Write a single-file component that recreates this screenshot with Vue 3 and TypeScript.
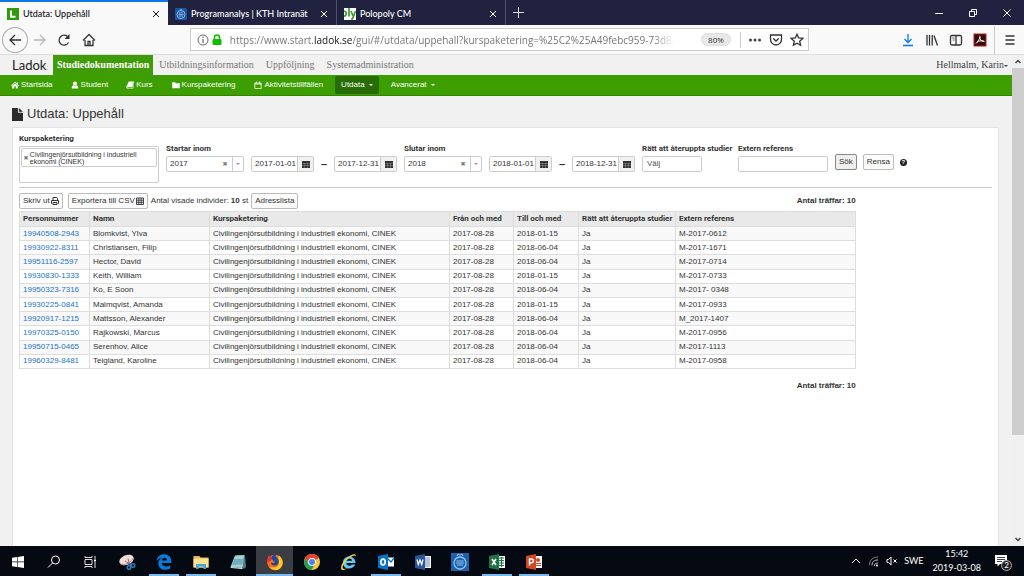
<script setup lang="ts">
import { ref } from 'vue'

interface Row {
  pnr: string
  name: string
  to: string
  reference: string
}

const course = 'Civilingenjörsutbildning i industriell ekonomi, CINEK'
const rows: Row[] = [
  { pnr: '19940508-2943', name: 'Blomkvist, Ylva', to: '2018-01-15', reference: 'M-2017-0612' },
  { pnr: '19930922-8311', name: 'Christiansen, Filip', to: '2018-06-04', reference: 'M-2017-1671' },
  { pnr: '19951116-2597', name: 'Hector, David', to: '2018-06-04', reference: 'M-2017-0714' },
  { pnr: '19930830-1333', name: 'Keith, William', to: '2018-01-15', reference: 'M-2017-0733' },
  { pnr: '19950323-7316', name: 'Ko, E Soon', to: '2018-06-04', reference: 'M-2017- 0348' },
  { pnr: '19930225-0841', name: 'Malmqvist, Amanda', to: '2018-01-15', reference: 'M-2017-0933' },
  { pnr: '19920917-1215', name: 'Mattsson, Alexander', to: '2018-06-04', reference: 'M_2017-1407' },
  { pnr: '19970325-0150', name: 'Rajkowski, Marcus', to: '2018-06-04', reference: 'M-2017-0956' },
  { pnr: '19950715-0465', name: 'Serenhov, Alice', to: '2018-06-04', reference: 'M-2017-1113' },
  { pnr: '19960329-8481', name: 'Teigland, Karoline', to: '2018-06-04', reference: 'M-2017-0958' },
]
const columns = ['Personnummer', 'Namn', 'Kurspaketering', 'Från och med', 'Till och med', 'Rätt att återuppta studier', 'Extern referens']

const periods = ref([
  { id: 'start', label: 'Startar inom', year: '2017', from: '2017-01-01', to: '2017-12-31' },
  { id: 'end', label: 'Slutar inom', year: '2018', from: '2018-01-01', to: '2018-12-31' },
])
const resume = ref('')
const external = ref('')
</script>

<template>
  <div class="screen">
    <header class="tabs">
      <div class="tab active">
        <svg class="fav" viewBox="0 0 12 12"><rect width="12" height="12" fill="#2f9a0c" /><path d="M4 2.5v6.3h4.5" fill="none" stroke="#fff" stroke-width="2" /></svg>
        <span class="tab-title">Utdata: Uppehåll</span>
        <button class="close" aria-label="Stäng flik"><svg viewBox="0 0 8 8"><path d="M1 1l6 6M7 1L1 7" /></svg></button>
      </div>
      <div class="tab">
        <svg class="fav" viewBox="0 0 12 12"><rect width="12" height="12" rx="1" fill="#1b56a5" /><circle cx="6" cy="6.5" r="4" fill="none" stroke="#8db9ea" /><path d="M4 5h4M3.5 6.5h5M4 8h4M5 2l1-1 1 1" stroke="#8db9ea" fill="none" stroke-width=".8" /></svg>
        <span class="tab-title">Programanalys | KTH Intranät</span>
        <button class="close" aria-label="Stäng flik"><svg viewBox="0 0 8 8"><path d="M1 1l6 6M7 1L1 7" /></svg></button>
      </div>
      <div class="tab">
        <svg class="fav" viewBox="0 0 12 12"><rect width="12" height="12" fill="#fff" /><path d="M0 3.500c3-1 3 5 0 4.500M5 0v8.500M7 3l2 5M11.500 3L8.500 11H7" fill="none" stroke="#3a9b35" stroke-width="1.700" /></svg>
        <span class="tab-title">Polopoly CM</span>
        <button class="close" aria-label="Stäng flik"><svg viewBox="0 0 8 8"><path d="M1 1l6 6M7 1L1 7" /></svg></button>
      </div>
      <button class="new-tab" aria-label="Ny flik"><svg viewBox="0 0 11 11"><path d="M5.500 0v11M0 5.500h11" /></svg></button>
      <div class="window-buttons">
        <button aria-label="Minimera"><svg viewBox="0 0 10 10"><path d="M1 5.500h8" /></svg></button>
        <button aria-label="Återställ"><svg viewBox="0 0 10 10"><path d="M1.500 3.500h5v5h-5zM3.500 3.500v-2h5v5h-2" /></svg></button>
        <button aria-label="Stäng"><svg viewBox="0 0 10 10"><path d="M1.500 1.500l7 7M8.500 1.500l-7 7" /></svg></button>
      </div>
    </header>

    <div class="toolbar">
      <button class="back" aria-label="Bakåt"><svg viewBox="0 0 14 14"><path d="M13 7H2M7 2L2 7l5 5" /></svg></button>
      <button class="tool faded" aria-label="Framåt"><svg viewBox="0 0 14 14"><path d="M1 7h11M7 2l5 5-5 5" /></svg></button>
      <button class="tool" aria-label="Ladda om"><svg viewBox="0 0 14 14"><path d="M11.500 9.500A5 5 0 1 1 11 4" /><path d="M12.500 1v5h-5z" fill="#333" stroke="none" /></svg></button>
      <button class="tool" aria-label="Hem"><svg viewBox="0 0 14 14"><path d="M1 7.500L7 1.500l6 6M3 7v5.500h8V7M6 12V8.500h2V12" /></svg></button>
      <div class="address">
        <svg class="info" viewBox="0 0 12 12"><circle cx="6" cy="6" r="5" fill="none" stroke="#666" /><path d="M6 5v4M6 2.800v1.200" stroke="#666" stroke-width="1.200" /></svg>
        <svg class="lock" viewBox="0 0 10 12"><path d="M2.500 5V3.500a2.500 2.500 0 0 1 5 0V5" fill="none" stroke="#12bc00" stroke-width="1.600" /><rect x=".5" y="5" width="9" height="6" rx="1" fill="#12bc00" /></svg>
        <div class="url">https://www.start.<b>ladok.se</b>/gui/#/utdata/uppehall?kurspaketering=%25C2%25A49febc959-73d8-</div>
        <button class="zoom">80%</button>
        <i class="rule"></i>
        <button class="tool" aria-label="Sidåtgärder"><svg viewBox="0 0 14 14"><g fill="#444" stroke="none"><circle cx="2.500" cy="7" r="1.500" /><circle cx="7" cy="7" r="1.500" /><circle cx="11.500" cy="7" r="1.500" /></g></svg></button>
        <button class="tool" aria-label="Pocket"><svg viewBox="0 0 14 14"><path d="M1.500 2h11v4.500a5.500 5.500 0 0 1-11 0zM4.300 5.500L7 8l2.700-2.500" /></svg></button>
        <button class="tool" aria-label="Bokmärk"><svg viewBox="0 0 14 14"><path d="M7 1.200l1.700 3.800 4.100.4-3.100 2.800.9 4.100L7 10.200l-3.600 2.100.9-4.100L1.200 5.400l4.100-.4z" /></svg></button>
      </div>
      <div class="extras">
        <button class="tool blue" aria-label="Hämtningar"><svg viewBox="0 0 14 14"><path d="M7 1v8.500M3.500 6L7 9.500 10.500 6M2 12.500h10" /></svg></button>
        <button class="tool" aria-label="Bibliotek"><svg viewBox="0 0 14 14"><path d="M2 2v10.500M4.500 2v10.500M7.200 2v10.500M9 2.500l3.500 10" /></svg></button>
        <button class="tool" aria-label="Sidofält"><svg viewBox="0 0 14 14"><rect x="1.500" y="2.500" width="11" height="9.500" rx="1.500" /><path d="M7 2.500V12" /><path d="M3.200 5h2.300M3.700 7h1.800" stroke-width=".8" /></svg></button>
        <button class="tool" aria-label="PDF"><svg viewBox="0 0 14 14"><rect x="1" y="1" width="12" height="12" fill="#35080a" stroke="#b8241f" stroke-width="1" /><path d="M6.500 3c1.500 0 .5 3-3.500 7.500M6.500 4c.5 3 2 4.500 5 4.500M4 9c2-1 4-1.500 6.500-1.200" stroke="#fff" stroke-width="1" /></svg></button>
        <i class="rule tall"></i>
        <button class="tool" aria-label="Meny"><svg viewBox="0 0 14 14"><path d="M2.500 3h9M2.500 7h9M2.500 11h9" /></svg></button>
      </div>
    </div>

    <div class="viewport">
      <div class="page">
        <nav class="areas">
          <a class="logo" href="#">Ladok<span>:</span></a>
          <a class="area current" href="#">Studiedokumentation</a>
          <a class="area" href="#">Utbildningsinformation</a>
          <a class="area" href="#">Uppföljning</a>
          <a class="area" href="#">Systemadministration</a>
          <a class="user" href="#">Hellmalm, Karin<i class="caret"></i></a>
        </nav>
        <nav class="menu">
          <a href="#"><svg viewBox="0 0 10 10"><path d="M5 1L0 5.500l.6.600L5 2.300l4.400 3.800.6-.600L8.500 4V1.500H7.300V3zM1.500 6L5 3l3.500 3v3.500H6V7H4v2.500H1.500z" /></svg>Startsida</a>
          <a href="#"><svg viewBox="0 0 10 10"><circle cx="5" cy="3" r="2.500" /><path d="M1 9.500C.5 6 2.500 5 3.300 5.200c1 .8 2.400.8 3.400 0C7.500 5 9.500 6 9 9.500z" /></svg>Student</a>
          <a href="#"><svg viewBox="0 0 10 10"><path d="M3.500.5H10L8 7.500H2c-.7.200-.5 1 0 1h6.500L10 3l.3.500L9 9.500H1.500C.3 9.500 0 8.500.5 7z" /></svg>Kurs</a>
          <a href="#"><svg viewBox="0 0 10 10"><path d="M.3 1.500h3.500l1 1.200h4.900v6.300H.3z" /></svg>Kurspaketering</a>
          <a href="#"><svg viewBox="0 0 10 10"><path d="M1 2.500h8v7H1zM1 3.800h8M3 .5v2.500M7 .5v2.500" fill="none" stroke="#fff" /></svg>Aktivitetstillfällen</a>
          <a class="open" href="#">Utdata<i class="caret"></i></a>
          <a href="#">Avancerat<i class="caret"></i></a>
        </nav>

        <h1><svg viewBox="0 0 12 14"><path d="M0 0h6.500v5H12v9H0zM7.500 0L12 4H7.500z" fill="#2b2b2b" /></svg>Utdata: Uppehåll</h1>

        <main class="panel">
          <form class="filters" @submit.prevent>
            <div class="field package">
              <label for="package">Kurspaketering</label>
              <div class="tagbox">
                <div class="tag"><button type="button" aria-label="Ta bort">✖</button><span>Civilingenjörsutbildning i industriell ekonomi (CINEK)</span></div>
                <input id="package" type="text">
              </div>
            </div>
            <template v-for="p in periods" :key="p.id">
              <div class="field">
                <label :for="p.id">{{ p.label }}</label>
                <div class="combo">
                  <select :id="p.id" v-model="p.year"><option>2017</option><option>2018</option></select>
                  <button type="button" class="clear" aria-label="Rensa år">✖</button>
                  <span class="drop"><i class="caret"></i></span>
                </div>
              </div>
              <div class="range">
                <div class="date"><input v-model="p.from" type="text" aria-label="Från datum"><button type="button" aria-label="Välj datum"><svg viewBox="0 0 8 8"><path d="M0 1h8v7H0z" fill="#333" /><path d="M0 3.500h8M0 5.500h8M2.500 3v5M5.500 3v5" stroke="#aaa" stroke-width=".4" /></svg></button></div>
                <b class="dash">–</b>
                <div class="date"><input v-model="p.to" type="text" aria-label="Till datum"><button type="button" aria-label="Välj datum"><svg viewBox="0 0 8 8"><path d="M0 1h8v7H0z" fill="#333" /><path d="M0 3.500h8M0 5.500h8M2.500 3v5M5.500 3v5" stroke="#aaa" stroke-width=".4" /></svg></button></div>
              </div>
            </template>
            <div class="field resume">
              <label for="resume">Rätt att återuppta studier</label>
              <select id="resume" v-model="resume"><option value="">Välj</option><option>Ja</option><option>Nej</option></select>
            </div>
            <div class="field external">
              <label for="external">Extern referens</label>
              <input id="external" v-model="external" type="text">
            </div>
            <div class="actions">
              <button class="btn focus">Sök</button>
              <button class="btn" type="reset">Rensa</button>
              <button class="help" type="button" aria-label="Hjälp">?</button>
            </div>
          </form>

          <section class="results">
            <div class="resultbar">
              <button class="btn">Skriv ut <svg viewBox="0 0 8 8"><path d="M2 3V.500h3.500L6.500 1.500V3M1 6.500H.5v-3h7v3H7M2 5.500h4v2H2z" fill="none" stroke="#333" /></svg></button>
              <button class="btn">Exportera till CSV <svg viewBox="0 0 8 8"><path d="M.5 1h7v6.500h-7zM.5 3.200h7M.5 5.300h7M2.800 1v6.500M5.200 1v6.500" fill="none" stroke="#333" stroke-width=".9" /></svg></button>
              <span>Antal visade individer: <strong>10</strong> st</span>
              <button class="btn">Adresslista</button>
              <strong class="hits">Antal träffar: 10</strong>
            </div>
            <table>
              <colgroup><col class="c1"><col class="c2"><col class="c3"><col class="c4"><col class="c5"><col class="c6"><col></colgroup>
              <thead><tr><th v-for="c in columns" :key="c" scope="col">{{ c }}</th></tr></thead>
              <tbody>
                <tr v-for="r in rows" :key="r.pnr">
                  <td><a href="#">{{ r.pnr }}</a></td>
                  <td>{{ r.name }}</td>
                  <td>{{ course }}</td>
                  <td>2017-08-28</td>
                  <td>{{ r.to }}</td>
                  <td>Ja</td>
                  <td>{{ r.reference }}</td>
                </tr>
              </tbody>
            </table>
            <strong class="hits bottom">Antal träffar: 10</strong>
          </section>
        </main>
      </div>
      <div class="scrollbar">
        <svg viewBox="0 0 12 12"><path d="M3.500 7.500L6 5l2.500 2.500" /></svg>
        <div class="track"><div class="thumb"></div></div>
        <svg viewBox="0 0 12 12"><path d="M3.500 4.500L6 7l2.500-2.500" /></svg>
      </div>
    </div>

    <footer class="taskbar">
      <button class="app sys" aria-label="Start"><svg viewBox="0 0 18 18"><path d="M3 4.700l5-.7v4.600H3zM8.600 3.900L15 3v5.600H8.600zM3 9.300h5v4.600l-5-.7zM8.600 9.300H15V15l-6.400-.9z" fill="#fff" /></svg></button>
      <button class="app sys" aria-label="Sök"><svg viewBox="0 0 18 18"><circle cx="10.500" cy="7" r="4" fill="none" stroke="#fff" /><path d="M7.500 10L3 14.500" stroke="#fff" /></svg></button>
      <button class="app sys" aria-label="Aktivitetsvy"><svg viewBox="0 0 18 18"><path d="M4 6.500h7v5H4zM4 3v1.500h7V3M4 15v-1.500h7V15M14 3v3M14 9v6" fill="none" stroke="#ddd" /><path d="M13 6.500h2v2h-2z" fill="#fff" /></svg></button>
      <button class="app" aria-label="Skärmklippverktyget"><svg viewBox="0 0 18 18"><ellipse cx="8.500" cy="7" rx="7.500" ry="4.800" fill="#eadedb" transform="rotate(-22 8.500 7)" /><path d="M2 10.500c4 2.500 10 0 13-5" fill="none" stroke="#b78e8b" /><path d="M10 5.500l1.500 6M7 8l5 3" stroke="#b43a3a" stroke-width=".8" /><g fill="none" stroke="#287fc4" stroke-width="1.400"><circle cx="11" cy="14.500" r="1.800" /><circle cx="15" cy="12.500" r="1.800" /><path d="M12 10l1 3" /></g></svg></button>
      <button class="app running" aria-label="Edge"><svg viewBox="0 0 18 18"><path d="M1.500 8C2 3.500 5.500 1 9.500 1.200c5 .2 7.300 4 7 8.800H6.700c.3 3.600 5.300 4.300 8.600 2.200v3.300c-5 2.700-12 1.200-12-5 0-2.800 1.600-4.500 3.700-5.500C4.500 5 2.800 6 1.500 8zm5.300-.5H12c0-3.700-4.700-3.500-5.200 0z" fill="#0a7bd8" /></svg></button>
      <button class="app running" aria-label="Utforskaren"><svg viewBox="0 0 18 18"><path d="M1.500 3h6l1 1.500h8v10h-15z" fill="#e7b84b" /><path d="M1.500 5.500h15v9h-15z" fill="#fde294" /><path d="M4 16v-5h10v5h-2.500v-2.500h-5V16z" fill="#41a5dc" /></svg></button>
      <button class="app" aria-label="Anteckningar"><svg viewBox="0 0 18 18"><path d="M6 3l10-1 1 12-2 2z" fill="#527b83" /><path d="M6 2.500l9-.5-1.500 13L1.500 14z" fill="#a2d1d8" /><path d="M5 6l9 0-.5 5.500L3 12z" fill="#6fb0bd" /><path d="M1.500 14l12 1v1L2 15z" fill="#edf5f6" /></svg></button>
      <button class="app running focused" aria-label="Firefox"><svg viewBox="0 0 18 18"><circle cx="9" cy="9.500" r="7.800" fill="#ff6b13" /><path d="M13 2.500c5 4 5 12-1 14.200-4 1-7-.7-8.500-3 4 2 9 .5 9.500-3.700.2-3-1.500-5 0-7.500z" fill="#ffc928" /><path d="M1.500 9C.8 5.500 2 3.500 3.500 2c.2 1.500 1.300 2 3 2l-2 4z" fill="#e4342b" /><path d="M5.500 6.500C5 3 8 1 10.500 1.700c-1.500 1-1 2 .5 3 2.500 2 2.500 7-1.500 7.800-3.500.7-4.700-1.500-4.700-3 1.700 1 3 .3 4.700-.8-1.700-.2-2.500-.7-2.500-1.700z" fill="#164ba5" /></svg></button>
      <button class="app" aria-label="Chrome"><svg viewBox="0 0 18 18"><circle cx="9" cy="9" r="8" fill="#f9c934" /><path d="M9 9L2.100 5A8 8 0 0 1 15.900 5z" fill="#e14436" /><path d="M2.100 5A8 8 0 0 0 8.500 17L12 11 5.500 10.500z" fill="#249b56" /><path d="M2.100 5A8 8 0 0 1 15.900 5H9l-3.500 5z" fill="#e14436" /><circle cx="9" cy="9" r="3.900" fill="#fff" /><circle cx="9" cy="9" r="3" fill="#4684ef" /></svg></button>
      <button class="app" aria-label="Internet Explorer"><svg viewBox="0 0 18 18"><path d="M15.500 10H6.300c.3 3.200 4.200 3.500 5.500 1.400h3.500C13 17 3 17.300 3 9.500 3 1.500 15.500 1 15.500 10zM6.300 7.800H12c-.3-2.800-5.200-3-5.700 0z" fill="#63c9f4" /><path d="M1.500 16.500C-.5 14 4 5.500 11 2.200 14 .8 16.500 1 16 4c0-2-2-2-5 0-6 3.500-9.500 9.500-8 11.500 1 1 2.500.2 4-.5-2 1.700-4 2.800-5.500 1.500z" fill="#f4d147" /></svg></button>
      <button class="app running" aria-label="Outlook"><svg viewBox="0 0 18 18"><path d="M10 4.500h7v9h-7z" fill="#fff" /><path d="M10 5l4 4 3-4" fill="none" stroke="#0873c5" stroke-width="1.300" /><path d="M1 3l10-2v16L1 15z" fill="#0873c5" /><ellipse cx="6" cy="9" rx="2.200" ry="2.800" fill="none" stroke="#fff" stroke-width="1.700" /></svg></button>
      <button class="app" aria-label="Word"><svg viewBox="0 0 18 18"><path d="M10 3h7v12h-7z" fill="#fff" /><path d="M11 5h5M11 7h5M11 9h5M11 11h5M11 13h5" stroke="#6684bb" /><path d="M1 3l10-2v16L1 15z" fill="#2a579a" /><path d="M3 6.500l1.300 5L6 7l1.700 4.500L9 6.500" fill="none" stroke="#fff" stroke-width="1.200" /></svg></button>
      <button class="app" aria-label="KTH"><svg viewBox="0 0 18 18"><path d="M0 0h18v18H0z" fill="#1c61ad" /><circle cx="9" cy="10" r="6" fill="none" stroke="#94c4ee" stroke-width="1.300" /><path d="M5.500 8h7M5 10h8M6 12h6M6 3l1-2 2 1 2-1 1 2" fill="none" stroke="#94c4ee" /></svg></button>
      <button class="app running" aria-label="Excel"><svg viewBox="0 0 18 18"><path d="M10 3h7v12h-7z" fill="#fff" /><path d="M11 5h5M11 7.500h5M11 10h5M11 12.500h5M13.500 4v10" stroke="#217346" stroke-width="1.200" /><path d="M1 3l10-2v16L1 15z" fill="#1f7245" /><path d="M4 6l4 6M8 6l-4 6" stroke="#fff" stroke-width="1.500" /></svg></button>
      <button class="app running" aria-label="PowerPoint"><svg viewBox="0 0 18 18"><path d="M10 3h7v12h-7z" fill="#fff" /><path d="M11 10.500h5M11 12.500h5" stroke="#d24726" /><circle cx="13" cy="7" r="2" fill="#d24726" /><path d="M1 3l10-2v16L1 15z" fill="#d24726" /><path d="M4.500 12.500V6H6.500a1.800 1.800 0 0 1 0 3.800h-2" fill="none" stroke="#fff" stroke-width="1.500" /></svg></button>
      <div class="tray">
        <svg viewBox="0 0 12 12"><path d="M2 8l4-4 4 4" fill="none" stroke="#fff" /></svg>
        <svg viewBox="0 0 12 12"><g fill="none" stroke="#ccc"><path d="M1.500 10C1.500 5 5 2 10 2" opacity=".6" /><path d="M4 10.500C4 7 6 5 10 5M6.500 11C6.500 9 7.500 8 10 8" /></g><circle cx="9" cy="10.500" r="1" fill="#fff" /></svg>
        <svg viewBox="0 0 12 12"><path d="M1 4.500h1.500L5 2v8L2.500 7.500H1zM7.500 4.500l3 3M10.500 4.500l-3 3" fill="none" stroke="#fff" /></svg>
        <span class="lang">SWE</span>
        <time class="clock">15:42<br>2019-03-08</time>
        <button class="notice" aria-label="Meddelanden"><svg viewBox="0 0 14 14"><path d="M1 1h12v9H6l-2.500 2.500V10H1z" fill="#fff" /><path d="M3 3.500h8M3 5.500h8M3 7.500h5" stroke="#111" stroke-width=".8" /></svg><span class="count">2</span></button>
      </div>
    </footer>
  </div>
</template>

<style>
html, body { margin: 0; background: #f1f1f1; }
</style>

<style scoped>
* { box-sizing: border-box; }
.screen { min-height: 100vh; display: flex; flex-direction: column; font-family: "Liberation Sans", Arial, sans-serif; font-size: 8px; line-height: 10px; color: #333; }
button, input, select { font: inherit; color: inherit; margin: 0; padding: 0; border: 0; background: none; border-radius: 0; min-width: 0; }
button { display: inline-flex; align-items: center; justify-content: center; white-space: nowrap; }
select { appearance: none; }
svg { display: block; flex: none; }
a { color: inherit; text-decoration: none; }
.caret { display: inline-block; border: 2px solid transparent; border-top-color: currentColor; border-bottom: 0; margin-left: 4px; vertical-align: middle; }

.tabs { display: flex; height: 25px; background: #20223f; font-family: Lato, "Noto Sans", sans-serif; font-size: 9px; color: #fff; }
.tab { width: 169px; display: flex; align-items: center; gap: 4px; padding: 2px 8px 0 7px; border-right: 1px solid #505269; font-weight: 500; }
.tab.active { width: 168px; background: #f9f9fa; color: #111; border-top: 2px solid #0a78e8; padding-top: 0; border-right: 0; }
.fav { width: 12px; height: 12px; }
.tab-title { flex: 1; white-space: nowrap; }
.close svg { width: 8px; height: 8px; stroke: currentColor; }
.new-tab { width: 24px; }
.new-tab svg { width: 11px; height: 11px; stroke: #ddd; }
.window-buttons { margin-left: auto; display: flex; }
.window-buttons button { width: 34px; }
.window-buttons svg { width: 10px; height: 10px; fill: none; stroke: #fff; }

.toolbar { display: flex; align-items: center; height: 30px; background: #f9f9fa; border-bottom: 1px solid #ddd; padding: 0 2px; font-family: "Open Sans", "Noto Sans", sans-serif; }
.back { width: 26px; height: 26px; border: 1px solid #aaa; border-radius: 50%; }
.back svg, .tool svg { width: 14px; height: 14px; fill: none; stroke: #333; stroke-width: 1.3; }
.tool { width: 24px; height: 24px; }
.tool.faded svg { stroke: #b5b5b5; }
.tool.blue svg { stroke: #0a78e8; }
.address { flex: 1; height: 23px; margin: 0 87px 0 88px; display: flex; align-items: center; background: #fff; border: 1px solid #ccc; padding-left: 6px; }
.address .tool { width: 21px; }
.info { width: 12px; height: 12px; }
.lock { width: 10px; height: 12px; margin: 0 8px 0 3px; }
.url { flex: 1; min-width: 0; overflow: hidden; white-space: nowrap; font-size: 10px; line-height: 16px; color: #777; mask-image: linear-gradient(to right, #000 95%, transparent); }
.url b { font-weight: 400; color: #111; }
.zoom { width: 30px; height: 13px; margin-left: 26px; background: #e8e8e8; border: 1px solid #ddd; border-radius: 7px; }
.rule { width: 1px; height: 16px; background: #ccc; margin: 0 4px 0 9px; }
.back + .tool + .tool, .back + .tool + .tool + .tool { width: 25px; }
.extras { display: flex; align-items: center; }
.rule.tall { height: 28px; margin: 0 3px 0 2px; }

.viewport { flex: 1; display: flex; }
.page { flex: 1; min-width: 0; display: flex; flex-direction: column; background: #f1f1f1; }
.areas { display: flex; align-items: stretch; height: 20px; padding: 0 4px 0 12px; font-family: "Liberation Serif", "Times New Roman", serif; font-size: 10px; line-height: 20px; color: #777; }
.logo { width: 41px; font-family: Lato, sans-serif; font-size: 13px; color: #222; }
.logo span { color: #d49c75; font-size: 8px; }
.area { padding: 0 6px; }
.area.current { padding: 0 4px; background: #3f9c08; color: #fff; font-weight: 700; }
.user { margin-left: auto; color: #444; }
.user .caret { margin-left: 0; }
.menu { display: flex; align-items: center; height: 21px; background: #3c9e00; border-bottom: 1px solid #318400; color: #fff; padding-left: 2px; }
.menu a { display: flex; align-items: center; padding: 0 9px; height: 18px; }
.menu a:nth-child(n + 4) { padding-left: 10px; }
.menu svg { width: 8px; height: 8px; fill: #fff; margin-right: 2px; }
.menu a.open { background: #286c05; border-radius: 2px; padding: 0 6px; margin: 0 2px 0 3px; }
h1 { display: flex; align-items: center; gap: 4px; margin: 9px 12px 4px; font-size: 13px; line-height: 18px; font-weight: 400; }
h1 svg { width: 11px; height: 13px; }

.panel { flex: 1; margin: 0 13px 0 12px; padding: 6px 6px 0; background: #fff; border: 1px solid #e3e3e3; border-bottom: 0; }
.filters { display: flex; align-items: flex-start; gap: 7px; border-bottom: 1px solid #ccc; padding-bottom: 4px; height: 54px; }
label, th { font-family: Roboto, "Liberation Sans", sans-serif; font-weight: 700; }
label { display: block; white-space: nowrap; line-height: 10px; }
.field:not(.package) { padding-top: 10px; }
.field:not(.package) label { margin-bottom: 2px; }
.package { width: 140px; }
.tagbox { margin-top: 2px; height: 37px; border: 1px solid #ccc; border-radius: 2px; padding: 1px; }
.tag { display: flex; align-items: center; gap: 2px; border: 1px solid #ccc; border-radius: 2px; padding: 1px 2px; font-size: 7px; line-height: 7px; height: 19px; }
.tag button, .clear { font-family: "DejaVu Sans", sans-serif; font-size: 6px; color: #777; }
.tagbox input { width: 100%; height: 12px; }
.combo { display: flex; width: 78px; height: 16px; border: 1px solid #ccc; border-radius: 2px; }
.combo select { flex: 1; padding-left: 3px; }
.clear { width: 14px; }
.drop { width: 11px; border-left: 1px solid #ccc; display: flex; align-items: center; justify-content: center; color: #999; }
.drop .caret { margin: 0; }
.range { display: flex; padding-top: 22px; }
.date { display: flex; width: 63px; height: 16px; border: 1px solid #ccc; border-radius: 2px; }
.date input { flex: 1; padding-left: 3px; }
.date button { width: 16px; background: #f0f0f0; border-left: 1px solid #ccc; }
.date svg { width: 8px; height: 8px; }
.dash { width: 20px; text-align: center; line-height: 16px; font-size: 11px; }
.resume { width: 89px; }
.resume select { width: 60px; }
.external { width: 90px; }
.external input { width: 100%; }
.resume select, .external input { display: block; height: 16px; border: 1px solid #ccc; border-radius: 2px; padding: 0 4px; color: #555; }
.actions { display: flex; gap: 6px; padding-top: 20px; align-items: center; }
.btn { height: 16px; padding: 0 3px; gap: 1px; background: #fbfbfb; border: 1px solid #bbb; border-radius: 2px; }
.btn svg { width: 8px; height: 8px; }
.btn.focus { background: #eee; border-color: #888; }
.help { width: 7px; height: 7px; border-radius: 50%; background: #222; color: #fff; font-size: 6px; line-height: 7px; font-weight: 700; }

.results { width: 86%; padding-top: 5px; }
.resultbar { display: flex; align-items: center; gap: 3px; padding-bottom: 2px; }
.resultbar .btn:first-child { margin-right: 2px; }
.hits { margin-left: auto; }
.hits.bottom { display: block; text-align: right; margin-top: 12px; }
table { width: 100%; height: 158px; table-layout: fixed; border-collapse: collapse; }
.c1 { width: 70px; } .c2 { width: 120px; } .c3 { width: 240px; } .c4 { width: 64px; } .c5 { width: 65px; } .c6 { width: 97px; }
th, td { padding: 0 3px; border: 1px solid #ddd; text-align: left; white-space: nowrap; line-height: 10px; }
th { height: 15px; background: #e9e9e9; }
tbody tr:nth-child(odd) { background: #f8f8f8; }
td a { color: #1c73c4; }

.scrollbar { width: 12px; display: flex; flex-direction: column; background: #f0f0f0; }
.scrollbar svg { width: 12px; height: 13px; fill: none; stroke: #444; stroke-width: 1.5; }
.track { flex: 1; }
.thumb { height: 79%; background: #cdcdcd; }

.taskbar { display: flex; height: 30px; background: #050a12; color: #fff; font-family: Lato, "Noto Sans", sans-serif; }
.app { width: 37px; padding: 2px 0 0; }
.app.sys { width: 36px; }
.app svg { width: 18px; height: 18px; }
.app.running { background: linear-gradient(#76b9ed, #76b9ed) center bottom / 30px 2px no-repeat; }
.app.running.focused { background: linear-gradient(#76b9ed, #76b9ed) center bottom / 100% 2px no-repeat, #3a3d43; }
.tray { margin-left: auto; display: flex; align-items: center; gap: 6px; padding-right: 12px; }
.tray svg { width: 12px; height: 12px; }
.lang { font-size: 9px; }
.clock { font-size: 9px; line-height: 14px; text-align: center; margin: 0 3px; }
.notice { position: relative; width: 22px; height: 22px; }
.tray .notice svg { width: 14px; height: 14px; }
.count { position: absolute; right: 0; bottom: 1px; width: 11px; height: 11px; border: 1px solid #aaa; border-radius: 50%; background: #222; font-size: 8px; line-height: 9px; text-align: center; }
</style>
